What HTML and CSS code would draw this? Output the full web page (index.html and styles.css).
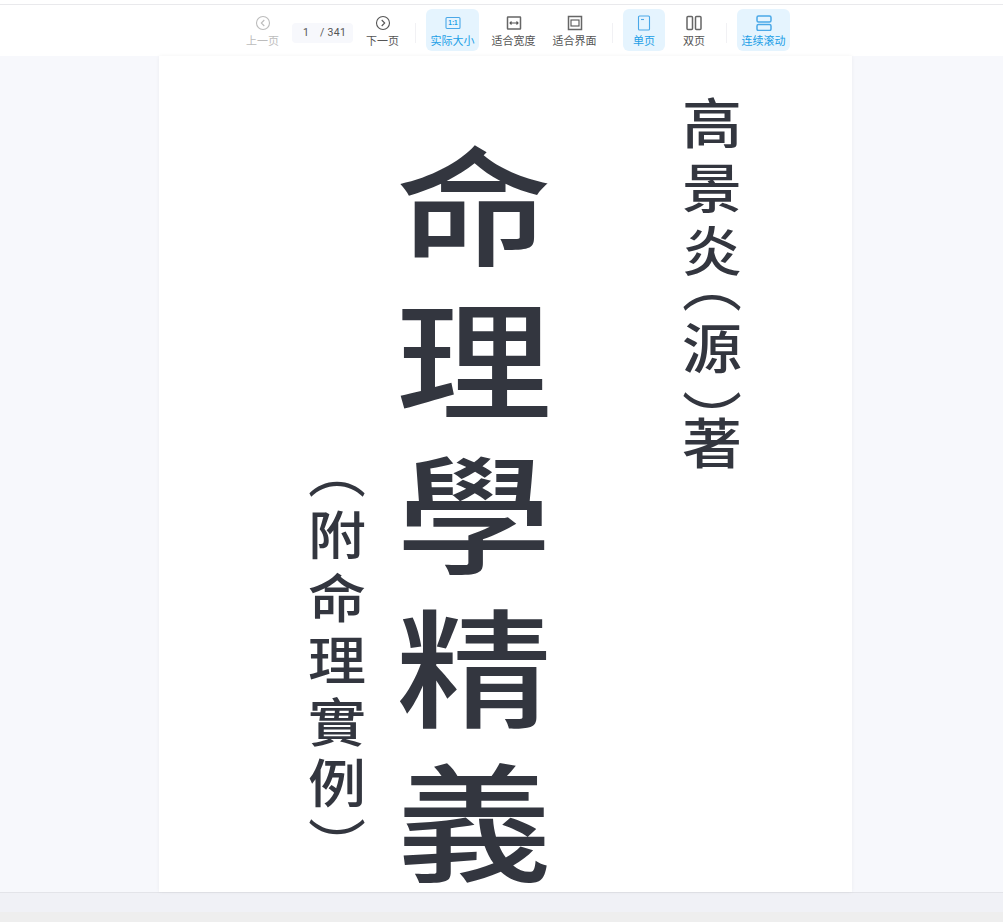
FILE: index.html
```html
<!DOCTYPE html>
<html lang="zh-CN">
<head>
    <meta charset="UTF-8">
    <title>命理學精義</title>
    <link rel="stylesheet" href="styles.css">
</head>
<body>
    <div class="toolbar">
        <div class="tool disabled">
            <svg width="16" height="16" viewBox="0 0 16 16"><circle cx="8" cy="8" r="6.5"/><path d="M9.3 5 6.3 8l3 3"/></svg>
            <span>上一页</span>
        </div>
        <div class="page-num"><span class="cur">1</span><span>/ 341</span></div>
        <div class="tool">
            <svg width="16" height="16" viewBox="0 0 16 16"><circle cx="8" cy="8" r="6.5"/><path d="M6.7 5l3 3-3 3"/></svg>
            <span>下一页</span>
        </div>
        <div class="sep"></div>
        <div class="tool wide active">
            <svg width="16" height="16" viewBox="0 0 16 16"><rect x="1" y="2.5" width="14" height="11" rx="1"/><text x="8" y="10.4" text-anchor="middle">1:1</text></svg>
            <span>实际大小</span>
        </div>
        <div class="tool wide">
            <svg width="16" height="16" viewBox="0 0 16 16"><rect class="thick" x="1.500" y="2" width="13" height="12" rx="0.500"/><path d="M4 8h8M5.500 6.500 4 8l1.500 1.500M10.500 6.500 12 8l-1.500 1.500"/></svg>
            <span>适合宽度</span>
        </div>
        <div class="tool wide">
            <svg width="16" height="16" viewBox="0 0 16 16"><rect class="thick" x="1.500" y="1.500" width="13" height="13"/><rect x="4" y="5" width="8" height="6"/></svg>
            <span>适合界面</span>
        </div>
        <div class="sep"></div>
        <div class="tool narrow active">
            <svg width="16" height="16" viewBox="0 0 16 16"><rect x="2.500" y="1" width="11" height="14" rx="1"/><path d="M5 4.500h3"/></svg>
            <span>单页</span>
        </div>
        <div class="tool narrow">
            <svg width="16" height="16" viewBox="0 0 16 16"><rect class="thick" x="1" y="1.500" width="5.500" height="13" rx="1"/><rect class="thick" x="9.500" y="1.500" width="5.500" height="13" rx="1"/></svg>
            <span>双页</span>
        </div>
        <div class="sep"></div>
        <div class="tool wide active">
            <svg width="16" height="16" viewBox="0 0 16 16"><rect class="thick" x="1" y="1" width="14" height="6" rx="1.500"/><rect class="thick" x="1" y="9.500" width="14" height="6" rx="1.500"/></svg>
            <span>连续滚动</span>
        </div>
    </div>

    <div class="viewer">
        <div class="page">
            <div class="col col-left">
                <div class="ch open" style="height: 36px">︵</div>
                <div class="ch" style="height: 63px">附</div>
                <div class="ch" style="height: 63px">命</div>
                <div class="ch" style="height: 62px">理</div>
                <div class="ch" style="height: 61px">實</div>
                <div class="ch" style="height: 61px">例</div>
                <div class="ch close" style="height: 36px">︶</div>
            </div>
            <div class="col col-main">
                <div class="ch">命</div>
                <div class="ch">理</div>
                <div class="ch">學</div>
                <div class="ch">精</div>
                <div class="ch">義</div>
            </div>
            <div class="col col-right">
                <div class="ch" style="height: 65px">高</div>
                <div class="ch" style="height: 66px">景</div>
                <div class="ch" style="height: 60px">炎</div>
                <div class="ch open" style="height: 44px">︵</div>
                <div class="ch" style="height: 46px">源</div>
                <div class="ch close" style="height: 46px">︶</div>
                <div class="ch" style="height: 52px">著</div>
            </div>
        </div>
    </div>

    <div class="statusbar"></div>
    <div class="footer"></div>
</body>
</html>
```

FILE: styles.css
```css
html, body {
    margin: 0;
    padding: 0;
    height: 100%;
}
body {
    display: flex;
    flex-direction: column;
    height: 100vh;
    overflow: hidden;
    background: #fff;
    font-family: "Noto Sans CJK SC", "Noto Sans", sans-serif;
}
.toolbar {
    margin-top: 4px;
    height: 52px;
    box-sizing: border-box;
    border-top: 1px solid #e9e9ec;
    padding-left: 241px;
    padding-bottom: 2px;
    display: flex;
    align-items: center;
    gap: 8px;
    background: #fff;
    flex: none;
}
.tool {
    width: 43px;
    height: 42px;
    box-sizing: border-box;
    padding-top: 4px;
    border-radius: 6px;
    display: flex;
    flex-direction: column;
    align-items: center;
    justify-content: center;
    gap: 2px;
    font-size: 11px;
    line-height: 15px;
    color: #555;
    white-space: nowrap;
}
.tool.wide { width: 53px; }
.tool.narrow { width: 42px; }
.tool svg {
    fill: none;
    stroke: #555;
    stroke-width: 1.1;
    display: block;
}
.tool svg .thick { stroke: #666; stroke-width: 1.5; }
.tool text {
    font-family: "Liberation Sans", sans-serif;
    font-size: 6.5px;
    font-weight: bold;
    fill: #1b9ee6;
    stroke: none;
}
.tool.disabled { color: #bcbcbc; }
.tool.disabled svg { stroke: #bcbcbc; }
.tool.active {
    background: #e5f4fe;
    color: #1b9ee6;
}
.tool.active svg, .tool.active svg .thick { stroke: #4aa8e8; }
.page-num {
    width: 61px;
    height: 20px;
    margin-top: 6px;
    border-radius: 4px;
    background: #f7f8fc;
    display: flex;
    align-items: center;
    font-family: Roboto, sans-serif;
    font-size: 10.500px;
    letter-spacing: 0.3px;
    color: #555;
}
.page-num .cur {
    width: 28px;
    text-align: center;
}
.sep {
    width: 1px;
    height: 20px;
    margin: 6px 2px 0 3px;
    background: #f1f1f4;
}
.viewer {
    flex: 1;
    min-height: 0;
    background: #f7f8fc;
    display: flex;
    justify-content: flex-start;
    padding-left: 159px;
}
.page {
    width: 693px;
    height: 100%;
    background: #fff;
    box-shadow: 0 0 4px rgba(0, 0, 0, 0.05);
    display: flex;
    overflow: hidden;
    position: relative;
}
.col {
    display: flex;
    flex-direction: column;
    flex: none;
    color: #33363f;
    font-family: "Noto Sans CJK TC", "Noto Sans CJK SC", sans-serif;
    font-weight: 500;
    line-height: 1;
}
.ch {
    display: flex;
    align-items: center;
    justify-content: center;
    transform: scaleY(0.9);
}
.col-left {
    width: 70px;
    margin-left: 143px;
    margin-top: 409px;
    font-size: 58px;
}
.col-main {
    width: 160px;
    margin-left: 22px;
    margin-top: 67px;
    font-size: 156px;
}
.col-main .ch {
    height: 154px;
    transform: scaleY(0.82);
}
.col-right {
    width: 70px;
    margin-left: 123px;
    margin-top: 32px;
    font-size: 60px;
}
.col .open {
    font-weight: 400;
    transform: translateY(-21px);
}
.col .close {
    font-weight: 400;
    transform: translateY(25px);
}
.col-left .open { transform: translateY(-16px); }
.col-left .close { transform: translateY(14px); }
.statusbar {
    height: 20px;
    flex: none;
    box-sizing: border-box;
    border-top: 1px solid #e3e4e9;
    background: #f0f1f6;
}
.footer {
    height: 10px;
    flex: none;
    background: #eeeeee;
}
```
